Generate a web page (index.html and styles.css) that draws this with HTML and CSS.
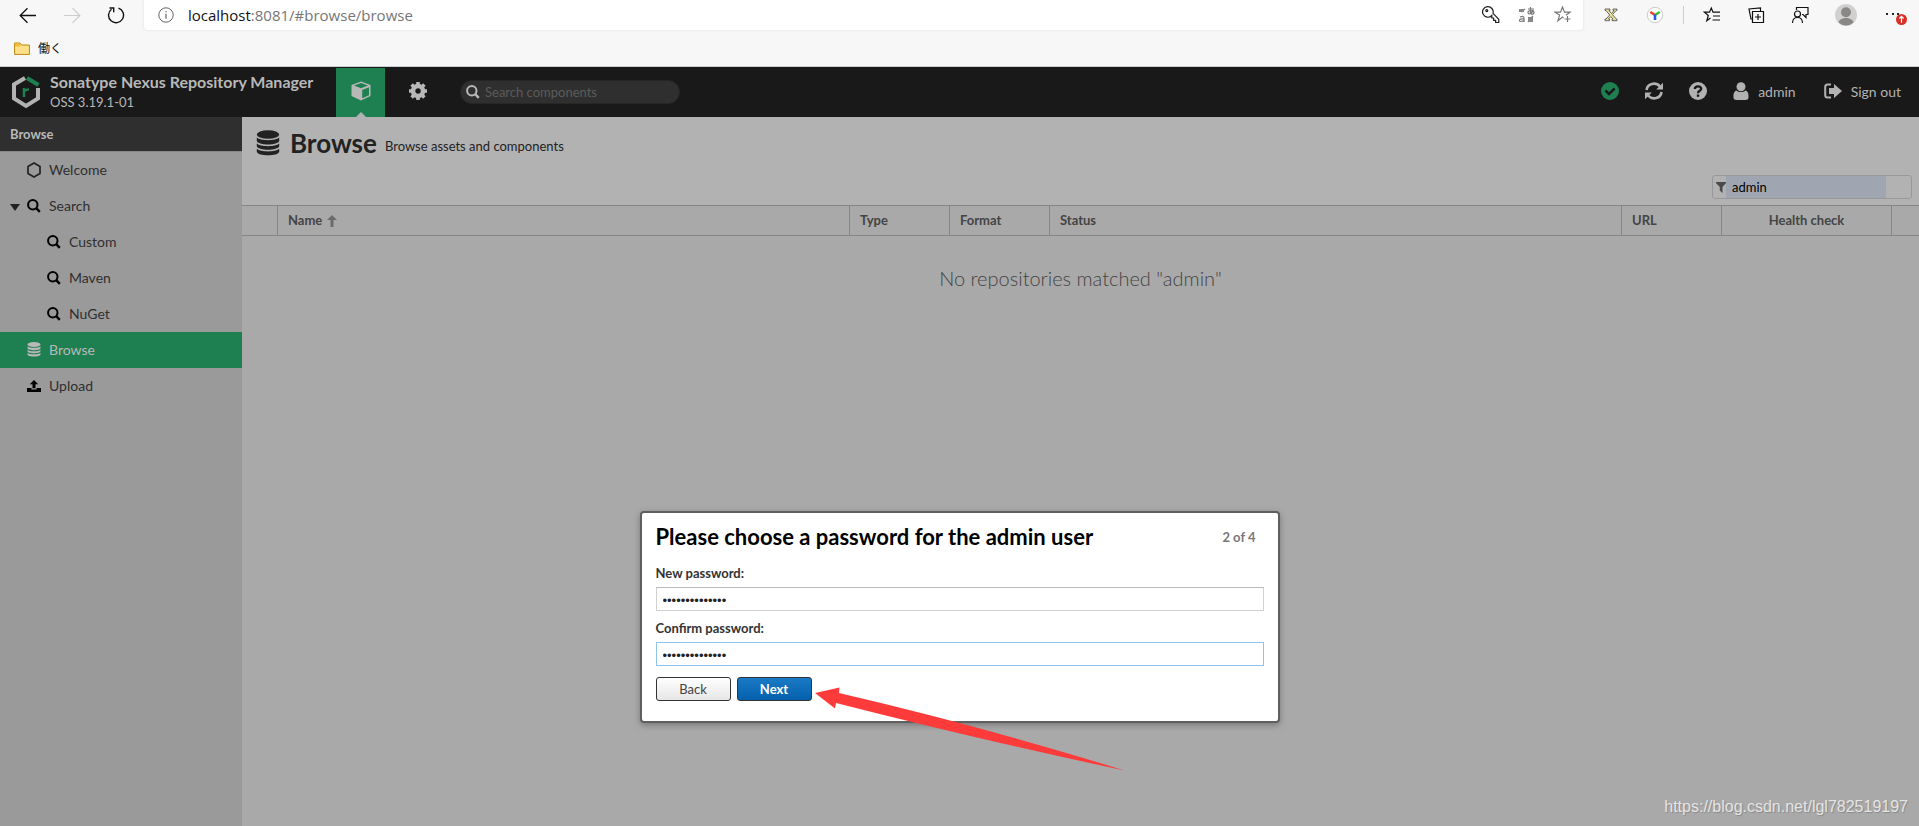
FILE: index.html
```html
<!DOCTYPE html>
<html lang="en">
<head>
<meta charset="utf-8">
<title>Browse - Sonatype Nexus Repository Manager</title>
<link rel="stylesheet" href="styles.css">
</head>
<body>
<svg class="sprite" aria-hidden="true">
  <symbol id="search" viewBox="0 0 14 14"><circle cx="5.8" cy="5.8" r="4.7" fill="none" stroke="currentColor" stroke-width="2"/><path d="M9.2 9.2 12.8 12.8" stroke="currentColor" stroke-width="2.4"/></symbol>
  <symbol id="database" viewBox="0 0 24 26"><ellipse cx="12" cy="4.5" rx="11.2" ry="4.3" fill="currentColor"/><path fill="currentColor" d="M.8 7.5C4 11 20 11 23.200 7.500V11c-1 4.600-21.400 4.600-22.400 0zM.8 13.500c3.200 3.500 19.200 3.500 22.400 0v2.700c-1 4.600-21.400 4.600-22.400 0zM.8 18.800c3.200 3.500 19.200 3.500 22.400 0v2.900c-1 4.700-21.400 4.700-22.400 0z"/></symbol>
</svg>
<div class="app">
  <div class="browser">
    <div class="toolbar">
      <div class="nav">
        <button class="plain" aria-label="Back"><svg width="18" height="18" viewBox="0 0 18 18" fill="none" stroke="#111" stroke-width="1.300"><path d="M17 9.500H1.500M8.500 2.200 1.200 9.500l7.300 7.300"/></svg></button>
        <button class="plain" aria-label="Forward"><svg width="18" height="18" viewBox="0 0 18 18" fill="none" stroke="#ccc" stroke-width="1.200"><path d="M1 9.500h15.500M9.500 2.200l7.300 7.300-7.300 7.300"/></svg></button>
        <button class="plain" aria-label="Reload"><svg width="18" height="18" viewBox="0 0 18 18" fill="none" stroke="#111" stroke-width="1.400"><path d="M11.500 2.100A7.500 7.500 0 1 1 4.500 3.200M2.500 2h4.200v4.300"/></svg></button>
      </div>
      <div class="address">
        <svg width="16" height="16" viewBox="0 0 16 16" fill="none" stroke="#666" stroke-width="1"><circle cx="8" cy="8" r="7.200"/><path d="M8 6.800v5M8 4v1.300" stroke-width="1.200"/></svg>
        <span class="url">localhost<span class="path">:8081/#browse/browse</span></span>
        <div class="addr-icons">
          <svg width="18" height="18" viewBox="0 0 18 18" fill="none" stroke="#222" stroke-width="1.200"><path d="M9.800 9.500A5.300 5.300 0 1 1 11 7.300l5.800 6v3.200h-3.200v-2.200h-2V12H9.800z"/><circle cx="4.800" cy="4.600" r="1"/></svg>
          <svg width="18" height="18" viewBox="0 0 18 18" fill="none" stroke="#777" stroke-width="1.200"><path d="M3 6l4-3M10 3h6M12.500 1v6.500M15 4c-1 4-5 5-5 2.500S16 4 16 6.500 13 8 13 8M2 11q4-1.500 4 1v4M6 13q-4.500-.500-4.500 1.500T6 14.500M15 10l-5 6" /><path d="M10 11h5v5h-5zM1 3h5v3H1z" fill="#888" stroke="none"/></svg>
          <svg width="18" height="18" viewBox="0 0 18 18" fill="none" stroke="#777" stroke-width="1.200"><path d="M9.500 12 8.500 11l-4.600 3.800 1.700-5.700L1 6.200h5.500L8.500 1l2 5.200H16l-4 3M13.500 10v6M10.500 13h6"/></svg>
        </div>
      </div>
      <div class="ext">
        <svg width="16" height="16" viewBox="0 0 16 16"><path d="M2 2h5v1.500H6l2.500 3L11 3.500h-1V2h4v1.500h-1L9.500 7.700l3.800 4.300H14v1.700H9V12h1L7.800 9.600 5.500 12h1v1.700H2V12h1l3.700-4L3 3.500H2z" fill="#efe39a" stroke="#666" stroke-width="1"/></svg>
        <svg width="18" height="18" viewBox="0 0 18 18" fill="none" stroke-width="2.600"><circle cx="9" cy="9" r="7.700" fill="#fff" stroke="#ccc" stroke-width="1"/><path d="M9 9 4.300 6" stroke="#f33d2a"/><path d="m9 9 4.700-3" stroke="#35c52c"/><path d="M9 8.500V14" stroke="#245be8"/></svg>
      </div>
      <div class="tools">
        <svg width="18" height="18" viewBox="0 0 18 18" fill="none" stroke="#111" stroke-width="1.200"><path d="M7.500 12 3.800 14.800 5.300 9.500 1.500 6.200h5L8.300 2 10 6.200h7M10 10h7M9.500 14H17"/></svg>
        <svg width="18" height="18" viewBox="0 0 18 18" fill="none" stroke="#111" stroke-width="1.200"><path d="M5.500 5.500h11v11h-11zM11 8v6M8 11h6M13.500 5V2L2 3l2 10h1"/></svg>
        <svg width="18" height="18" viewBox="0 0 18 18" fill="none" stroke="#111" stroke-width="1.200"><circle cx="6.500" cy="8" r="3"/><path d="M1.500 17c0-7.500 10-7.500 10 0M5.500 4V1.500H17v7h-2v3L12 8.500h-1"/></svg>
        <svg width="22" height="22" viewBox="0 0 22 22"><circle cx="11" cy="11" r="11" fill="#d2d0ce"/><circle cx="11" cy="8.300" r="5" fill="#8a8886"/><path d="M3.500 18.500c1-6 14-6 15 0a11 11 0 0 1-15 0" fill="#8a8886"/></svg>
        <svg width="22" height="22" viewBox="0 0 22 22"><path d="M1 9h2v2H1zM7 9h2v2H7zM12 9h2v2h-2z" fill="#222"/><circle cx="16.500" cy="15.500" r="5.500" fill="#d93025"/><path d="M16.500 18.800v-6M14.400 14.500l2.100-2.200 2.100 2.200" stroke="#fff" fill="none" stroke-width="1.200"/></svg>
      </div>
    </div>
    <div class="bookmarks">
      <svg width="16" height="13" viewBox="0 0 16 13"><path d="M.600 1h5.400l1.400 2h8v9.400H.600z" fill="#ffe08a" stroke="#b8860b"/><path d="M1 1.500h5L7 3 5.500 4.500H1z" fill="#f5bd3d"/></svg>
      <a class="bookmark" href="#">働く</a>
    </div>
  </div>

  <header class="header">
    <svg width="30" height="34" viewBox="0 0 30 34" fill="none" stroke-width="4"><path d="M14 3 3 9.500v14L15 31l12-7.500V13" stroke="#b2b2b2"/><path d="m16 3 11.500 7" stroke="#1e8050"/><path d="M13 22v-9M13 16.500q1.500-2.200 5-2" stroke="#1e8050" stroke-width="2.600"/></svg>
    <div class="brand"><div class="product">Sonatype Nexus Repository Manager</div><div class="version">OSS 3.19.1-01</div></div>
    <button class="mode active" aria-label="Browse mode"><svg width="20" height="20" viewBox="0 0 20 20"><path d="M10 .500 19.500 4v11L10 19.500.500 15V4z" fill="#b8b8b8"/><path d="m3 4.500 7-2.500 7 2.500-7 2.700zM11.200 9 18 6.200v8L11.200 17.300z" fill="#1e8050"/></svg></button>
    <button class="mode" aria-label="Administration"><svg width="18" height="18" viewBox="0 0 18 18" fill="none" stroke="#b8b8b8"><circle cx="9" cy="9" r="5" stroke-width="4.500"/><path d="M9 0v3M9 15v3M0 9h3M15 9h3M2.600 2.600l2.200 2.200M13.200 13.200l2.200 2.200M2.600 15.400l2.200-2.200M13.200 4.800l2.200-2.200" stroke-width="3.600"/></svg></button>
    <label class="quick"><svg width="14" height="14"><use href="#search"/></svg><input type="text" placeholder="Search components" aria-label="Search components"></label>
    <div class="actions">
      <button class="plain" aria-label="System status"><svg width="18" height="18" viewBox="0 0 18 18"><circle cx="9" cy="9" r="9" fill="#1e8050"/><path d="m4.500 8.500 3.500 3.500 5.700-5.500" fill="none" stroke="#191919" stroke-width="2.500"/></svg></button>
      <button class="plain" aria-label="Refresh"><svg width="18" height="18" viewBox="0 0 18 18" fill="none" stroke="#b2b2b2" stroke-width="2.600"><path d="M1.500 8C2.300 1.500 10.500-.500 15 4.500M16.500 10C15.700 16.500 7.500 18.500 3 13.500"/><path d="M18 .700v6.800h-6.800zM0 17.300v-6.800h6.800z" fill="#b2b2b2" stroke="none"/></svg></button>
      <button class="plain" aria-label="Help"><svg width="18" height="18" viewBox="0 0 18 18"><circle cx="9" cy="9" r="9" fill="#b2b2b2"/><path d="M5.800 7Q6 4.300 9 4.300t3.200 2.500C12.200 8.800 9 8.700 9 11.200" fill="none" stroke="#191919" stroke-width="2.300"/><path d="M7.800 12.500h2.400v2.300H7.800z" fill="#191919"/></svg></button>
      <button class="plain"><svg width="16" height="18" viewBox="0 0 16 18" fill="#b2b2b2"><path d="M3.600 8.500C.800 9 .300 12.500.500 15.500.600 17.300 1.800 18 3.500 18h9c1.700 0 2.900-.700 3-2.500.200-3-.300-6.500-3.100-7C10.500 10.500 5.500 10.500 3.600 8.500"/><circle cx="8" cy="4.700" r="4.500"/></svg><span>admin</span></button>
      <button class="plain last"><svg width="18" height="16" viewBox="0 0 18 16"><path d="M7 1.500H3.500Q1.200 1.500 1.200 4v8q0 2.500 2.300 2.500H7" fill="none" stroke="#b2b2b2" stroke-width="2"/><path d="M5 5h5V1l8 7-8 7v-4H5z" fill="#b2b2b2"/></svg><span>Sign out</span></button>
    </div>
  </header>

  <div class="body">
    <nav class="sidebar">
      <h2 class="side-title">Browse</h2>
      <a class="item" href="#"><svg width="14" height="16" viewBox="0 0 14 16"><path d="m7 1 6 3.500v7L7 15l-6-3.500v-7z" fill="none" stroke="#222" stroke-width="1.700"/></svg>Welcome</a>
      <a class="item" href="#"><svg class="caret" width="10" height="7" viewBox="0 0 10 7"><path d="M0 0h10L5 7z" fill="#222"/></svg><svg class="ico" width="14" height="14"><use href="#search"/></svg>Search</a>
      <a class="item sub" href="#"><svg class="ico" width="14" height="14"><use href="#search"/></svg>Custom</a>
      <a class="item sub" href="#"><svg class="ico" width="14" height="14"><use href="#search"/></svg>Maven</a>
      <a class="item sub" href="#"><svg class="ico" width="14" height="14"><use href="#search"/></svg>NuGet</a>
      <a class="item selected" href="#"><svg width="14" height="15"><use href="#database"/></svg>Browse</a>
      <a class="item" href="#"><svg width="14" height="12" viewBox="0 0 14 12"><path d="M7 0l4.200 4.200H8.500v4h-3v-4H2.800zM0 8h4.500v1.500h5V8H14v4H0z" fill="#000"/></svg>Upload</a>
    </nav>
    <main class="content">
      <div class="title-row">
        <svg width="24" height="26"><use href="#database"/></svg>
        <h1 class="title">Browse</h1><span class="desc">Browse assets and components</span>
      </div>
      <div class="filter-row">
        <label class="filter"><svg width="10" height="11" viewBox="0 0 10 11"><path d="M0 0h10v1L6.500 5v6L3.800 8.500V5L0 1z" fill="#4a4a4a"/></svg><input type="text" value="admin" aria-label="Filter"></label>
      </div>
      <table class="grid">
        <thead><tr><th class="c-icon"></th><th>Name <svg width="10" height="12" viewBox="0 0 10 12"><path d="M5 0l5 5H6.500v7h-3V5H0z" fill="#6c6c6c"/></svg></th><th class="c-s">Type</th><th class="c-s">Format</th><th>Status</th><th class="c-s">URL</th><th class="c-health">Health check</th><th class="c-end"></th></tr></thead>
        <tbody><tr><td class="empty" colspan="8">No repositories matched "admin"</td></tr></tbody>
      </table>
    </main>
  </div>

  <div class="overlay">
    <form class="dialog" role="dialog" aria-labelledby="dlg">
      <div class="dialog-head"><h2 id="dlg">Please choose a password for the admin user</h2><span class="step">2 of 4</span></div>
      <label for="np">New password:</label>
      <input id="np" type="password" value="abcdefghijklmn">
      <label for="cp">Confirm password:</label>
      <input id="cp" class="focused" type="password" value="abcdefghijklmn">
      <div class="buttons"><button type="button" class="btn">Back</button><button type="button" class="btn primary">Next</button></div>
      <svg class="arrow" width="310" height="86" viewBox="0 0 310 86"><path d="M0 8 24.500 2.500 24 8Q170 42 309.500 85.500 170 56 21 18L20 23.500z" fill="#fd3b3a"/></svg>
    </form>
  </div>
  <div class="watermark">https://blog.csdn.net/lgl782519197</div>
</div>
</body>
</html>
```
FILE: styles.css
```css
* { box-sizing: border-box; }
body { margin: 0; font-family: Lato, "Liberation Sans", sans-serif; font-size: 14px; color: #222; }
svg { display: block; flex: none; }
h1, h2 { margin: 0; }
a { color: inherit; text-decoration: none; }
button, input { font-family: inherit; font-size: inherit; }
.sprite { position: absolute; width: 0; height: 0; }
.app { position: relative; display: flex; flex-direction: column; min-height: 100vh; overflow: hidden; background: #a9a9a9; }
.plain { display: flex; align-items: center; gap: 9px; padding: 0; border: 0; background: none; color: #b2b2b2; }

.browser { height: 67px; background: #f7f7f7; border-bottom: 1px solid #cbcfcf; }
.toolbar { display: flex; height: 30px; align-items: center; }
.nav { display: flex; gap: 26px; width: 144px; padding-left: 19px; }
.address { flex: 1; display: flex; align-items: center; height: 30px; padding: 0 11px 0 14px; background: #fff; border-radius: 0 0 4px 4px; box-shadow: 0 0 3px #ddd; }
.url { margin-left: 14px; font: 15px/24px "Open Sans", sans-serif; color: #111; }
.path { color: #767676; }
.addr-icons { display: flex; gap: 18px; margin-left: auto; }
.ext { display: flex; align-items: center; gap: 27px; padding: 0 19px 0 20px; margin-right: 19px; border-right: 1px solid #ccc; }
.tools { display: flex; align-items: center; gap: 26px; padding-right: 12px; }
.tools svg:last-child { margin-left: 2px; }
.bookmarks { display: flex; align-items: center; gap: 8px; height: 36px; padding: 0 14px; }
.bookmark { font: 12px/16px "Noto Sans CJK JP", sans-serif; color: #111; }

.header { display: flex; align-items: center; height: 50px; padding: 0 18px 0 11px; background: #191919; color: #b8b8b8; }
.brand { width: 295px; padding-left: 9px; }
.product { font-size: 16px; line-height: 20px; font-weight: 700; }
.version { font-size: 13px; line-height: 20px; }
.mode { position: relative; display: flex; align-items: center; justify-content: center; width: 49px; height: 49px; align-self: flex-end; padding: 0 0 3px; border: 0; background: none; }
.mode + .mode { margin-left: 8px; }
.active { background: #1e8050; }
.active::after { content: ""; position: absolute; bottom: 0; left: 50%; margin-left: -5px; border: 5px solid transparent; border-top: 0; border-bottom-color: #b2b2b2; }
.quick { display: flex; align-items: center; gap: 5px; width: 220px; height: 24px; margin-left: 18px; padding: 0 5px; border: 1px solid #262626; border-radius: 12px; background: #2f2f2f; }
.quick input { flex: 1; min-width: 0; padding: 0; border: 0; outline: 0; background: none; color: #b2b2b2; font-size: 13px; }
.quick input::placeholder { color: #5c5c5c; opacity: 1; }
.actions { display: flex; align-items: center; gap: 26px; margin-left: auto; padding-bottom: 2px; }
.last { margin-left: 2px; }

.body { display: flex; flex: 1; }
.sidebar { width: 242px; flex: none; background: #9a9a9a; }
.side-title { height: 35px; padding-left: 10px; background: #2f2f2f; border-bottom: 1px solid #888; color: #b8b8b8; font-size: 13px; line-height: 34px; }
.item { position: relative; display: flex; align-items: center; gap: 8px; height: 36px; padding: 0 0 1px 27px; color: #2f2f2f; font-size: 14px; }
.sub { padding-left: 47px; }
.ico { color: #000; }
.caret { position: absolute; left: 10px; top: 16px; }
.selected { background: #1e8050; color: #b8b8b8; }

.content { flex: 1; min-width: 0; }
.title-row { display: flex; align-items: center; height: 54px; padding: 0 14px 3px; background: #b2b2b2; }
.title { margin-left: 10px; font-size: 26px; line-height: 32px; }
.desc { margin: 6px 0 0 8px; font-size: 13px; line-height: 16px; }
.filter-row { display: flex; justify-content: flex-end; height: 34px; padding: 4px 7px; background: #b2b2b2; }
.filter { display: flex; align-items: center; width: 200px; height: 24px; padding: 0 25px 0 3px; border: 1px solid #999; border-radius: 3px; }
.filter input { flex: 1; min-width: 0; height: 22px; padding: 0 6px; border: 0; outline: 0; background: #a0a6b1; color: #000; font-size: 13px; }
.grid { width: 100%; table-layout: fixed; border-collapse: separate; border-spacing: 0; }
.grid th { height: 31px; padding: 0 10px 2px; border: 1px solid #868686; border-width: 1px 1px 1px 0; color: #444; font-size: 13px; text-align: left; }
.grid th:last-child { border-right: 0; }
.grid th svg { display: inline-block; vertical-align: -2px; margin-left: 2px; }
.c-icon { width: 36px; }
.c-s { width: 100px; }
.grid .c-health { width: 170px; text-align: center; }
.c-end { width: 27px; }
.empty { height: 84px; padding: 0; text-align: center; font-size: 20px; font-weight: 300; color: #444; }

.overlay { position: absolute; top: 511px; left: 0; right: 0; display: flex; justify-content: center; }
.dialog { position: relative; display: flex; flex-direction: column; width: 640px; padding: 10px 14px 20px; border: 2px solid #5f5f5f; border-radius: 4px; background: #fff; box-shadow: 0 2px 6px #777; color: #333; }
.dialog-head { display: flex; align-items: center; justify-content: space-between; height: 28px; padding-right: 8px; color: #000; }
.dialog-head h2 { font-size: 22px; line-height: 28px; }
.step { font-size: 13px; font-weight: 700; color: #777; }
.dialog label { margin-top: 7px; font-size: 13px; line-height: 20px; font-weight: 700; }
.dialog .dialog-head + label { margin-top: 12px; }
.dialog input { height: 24px; margin-top: 4px; padding: 2px 6px 0; border: 1px solid #d0d0d0; border-top-color: #bbb; outline: 0; font: 13px "Liberation Sans", sans-serif; color: #222; }
.dialog .focused { border-color: #8fc4ea; }
.buttons { display: flex; gap: 6px; margin-top: 11px; }
.btn { width: 75px; height: 24px; padding: 0; border: 1px solid #333; border-radius: 3px; background: linear-gradient(#fff, #e6e6e6); color: #444; font-size: 13px; }
.primary { background: linear-gradient(#1b7ac5, #0460ac); color: #fff; font-weight: 700; }
.arrow { position: absolute; left: 173px; top: 172px; }
.watermark { position: absolute; right: 11px; bottom: 8px; font: 16px/22px "Liberation Sans", sans-serif; color: #e4e4e4; text-shadow: 1px 1px 1px #888; }
```
